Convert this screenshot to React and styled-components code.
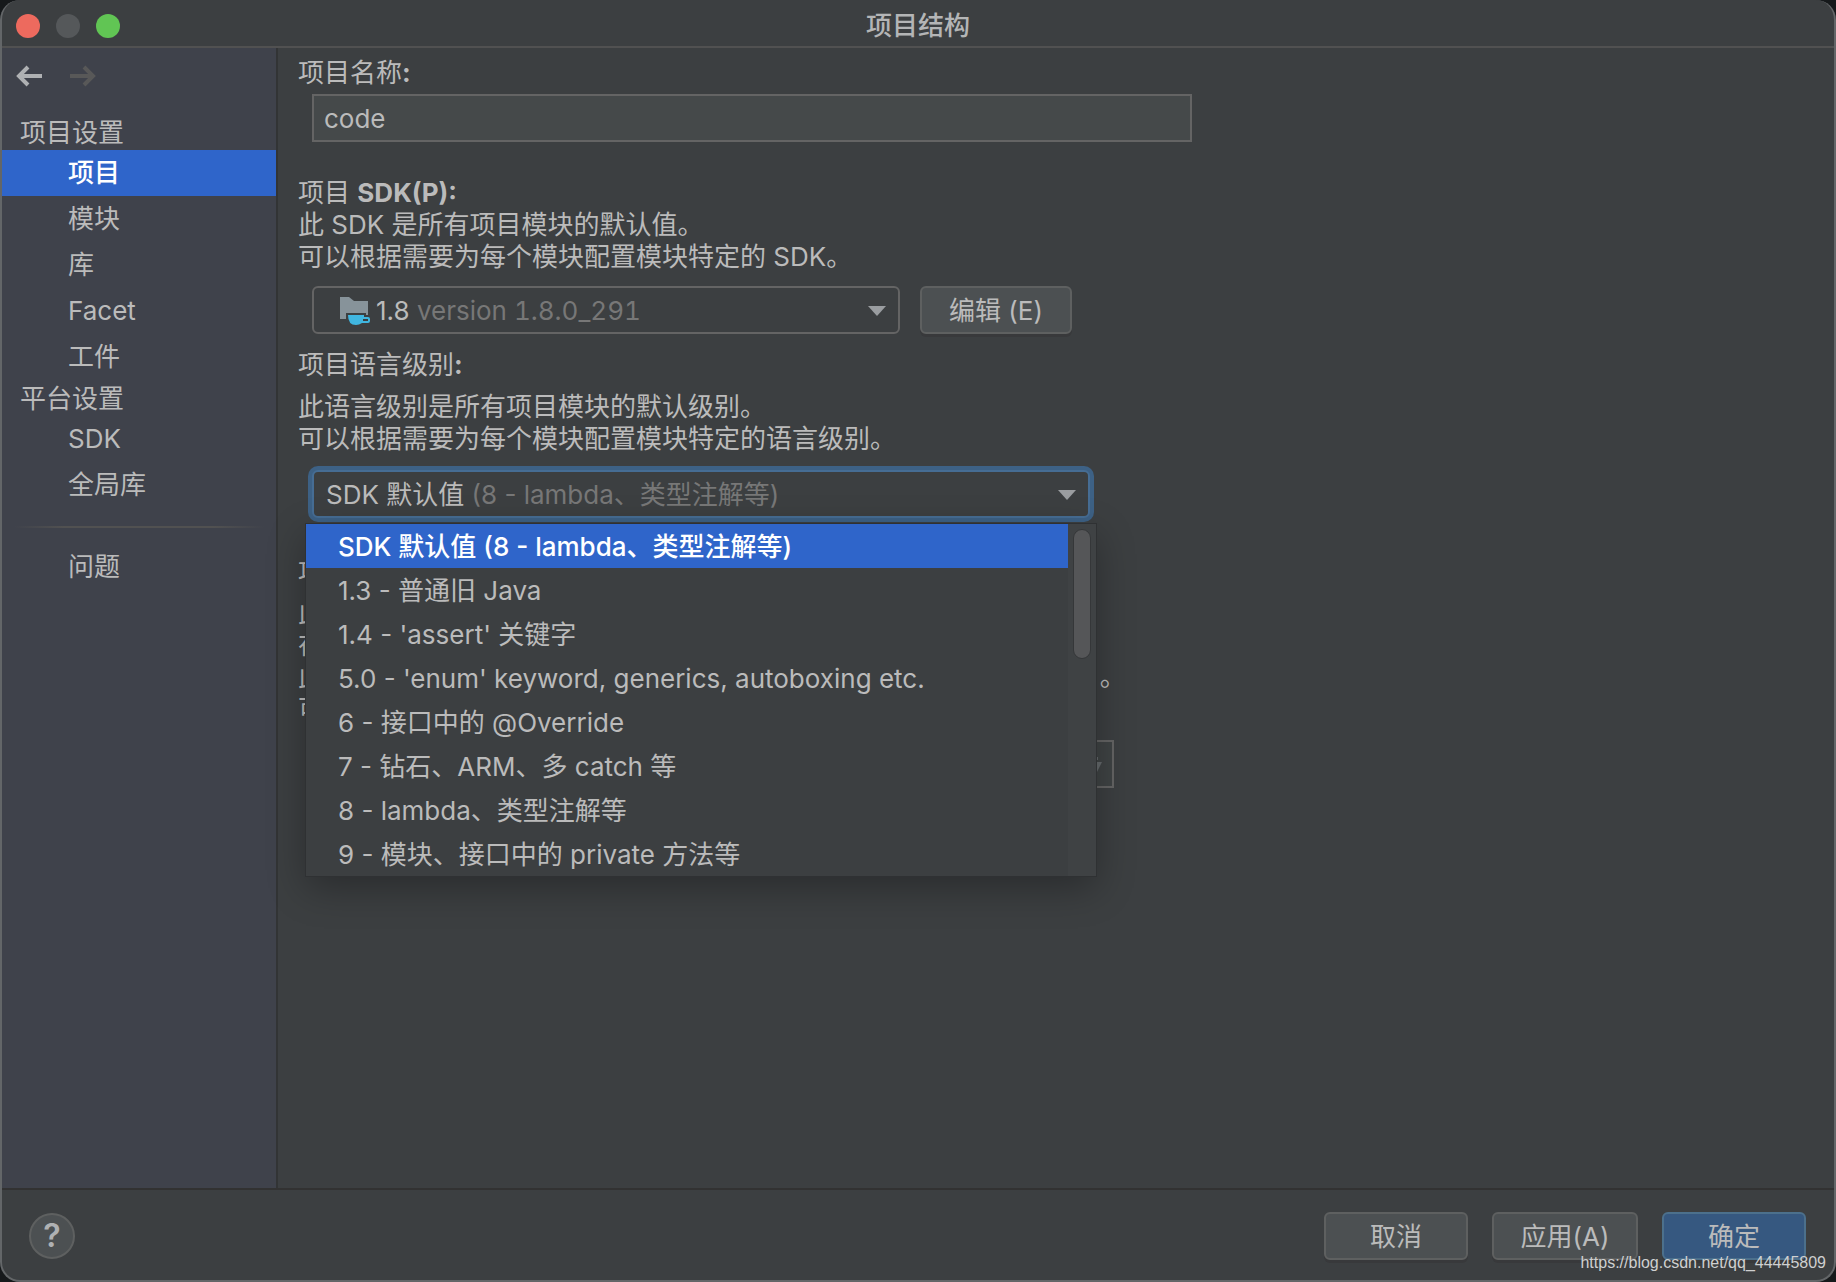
import React, { useState } from "react";
import styled, { createGlobalStyle } from "styled-components";

const projectItems = ["项目", "模块", "库", "Facet", "工件"];
const platformItems = ["SDK", "全局库"];

const levels = [
  { name: "SDK 默认值", detail: "(8 - lambda、类型注解等)" },
  { name: "1.3 - 普通旧 Java" },
  { name: "1.4 - 'assert' 关键字" },
  { name: "5.0 - 'enum' keyword, generics, autoboxing etc." },
  { name: "6 - 接口中的 @Override" },
  { name: "7 - 钻石、ARM、多 catch 等" },
  { name: "8 - lambda、类型注解等" },
  { name: "9 - 模块、接口中的 private 方法等" },
];

const BackArrow = () => (
  <svg width="28" height="22" viewBox="0 0 28 22" fill="none" stroke="currentColor" strokeWidth="4">
    <path d="M3 11H27M13 2L4 11L13 20" />
  </svg>
);

const ForwardArrow = () => (
  <svg width="28" height="22" viewBox="0 0 28 22" fill="none" stroke="currentColor" strokeWidth="4">
    <path d="M1 11H25M15 2L24 11L15 20" />
  </svg>
);

const Chevron = () => (
  <svg width="18" height="10" viewBox="0 0 18 10" fill="#9a9da0">
    <path d="M0 0H18L9 10Z" />
  </svg>
);

const SdkIcon = () => (
  <svg width="32" height="30" viewBox="0 0 32 30">
    <path d="M0 1H9L14 5H28V19H26V17H6V23H0Z" fill="#87939a" />
    <path
      fillRule="evenodd"
      d="M8 19H24V21H28Q30 21 30 23V25Q30 27 28 27H22Q19 29 16 29Q8 29 8 19ZM23 23V25H28V23Z"
      fill="#40b6e0"
    />
  </svg>
);

const FolderIcon = () => (
  <svg width="26" height="20" viewBox="0 0 26 20" fill="#65696c">
    <path d="M0 0H8L11 3H22V6H6L0 17Z" />
    <path d="M7 8H26L20 20H1Z" />
  </svg>
);

function NavItems({ items, active, onPick }) {
  return (
    <NavList>
      {items.map((item) => (
        <li key={item}>
          <NavLink
            href="#"
            $active={item === active}
            onClick={(e) => {
              e.preventDefault();
              onPick(item);
            }}
          >
            {item}
          </NavLink>
        </li>
      ))}
    </NavList>
  );
}

function App() {
  const [page, setPage] = useState("项目");
  const [name, setName] = useState("code");
  const [level, setLevel] = useState(0);
  const [open, setOpen] = useState(true);

  const pickLevel = (index) => {
    setLevel(index);
    setOpen(false);
  };

  return (
    <Window>
      <GlobalStyle />
      <TitleBar>
        <Lights>
          <Light type="button" aria-label="关闭" $color="#ed6a5e" />
          <Light type="button" aria-label="最小化" $color="#55585a" disabled />
          <Light type="button" aria-label="缩放" $color="#61c554" />
        </Lights>
        <Title>项目结构</Title>
      </TitleBar>

      <Body>
        <Sidebar>
          <History>
            <HistoryButton type="button" aria-label="后退">
              <BackArrow />
            </HistoryButton>
            <HistoryButton type="button" aria-label="前进" disabled>
              <ForwardArrow />
            </HistoryButton>
          </History>
          <NavTitle>项目设置</NavTitle>
          <NavItems items={projectItems} active={page} onPick={setPage} />
          <NavTitle>平台设置</NavTitle>
          <NavItems items={platformItems} active={page} onPick={setPage} />
          <Divider />
          <NavItems items={["问题"]} active={page} onPick={setPage} />
        </Sidebar>

        <Content>
          <Field $space={35}>
            <Label htmlFor="name">
              项目名称<b>:</b>
            </Label>
            <TextInput id="name" value={name} onChange={(e) => setName(e.target.value)} />
          </Field>

          <Field $space={15}>
            <Label htmlFor="sdk">
              项目 <b>SDK(P):</b>
            </Label>
            <Hint $above={0} $below={13}>
              此 SDK 是所有项目模块的默认值。
              <br />
              可以根据需要为每个模块配置模块特定的 SDK。
            </Hint>
            <SdkRow>
              <Combo $width={588}>
                <Select id="sdk">
                  <option>1.8 version 1.8.0_291</option>
                </Select>
                <Face $indent={28}>
                  <SdkIcon />
                  <FaceText>
                    1.8 <Version>version 1.8.0_291</Version>
                  </FaceText>
                  <Chevron />
                </Face>
              </Combo>
              <Button type="button" $width={152}>
                编辑 (E)
              </Button>
            </SdkRow>
          </Field>

          <Field $space={39}>
            <Label htmlFor="level">
              项目语言级别<b>:</b>
            </Label>
            <Hint $above={10} $below={15}>
              此语言级别是所有项目模块的默认级别。
              <br />
              可以根据需要为每个模块配置模块特定的语言级别。
            </Hint>
            <Combo $width={778}>
              <Select
                id="level"
                $focused
                value={level}
                onChange={(e) => pickLevel(Number(e.target.value))}
              >
                {levels.map((item, index) => (
                  <option key={item.name} value={index}>
                    {item.name} {item.detail}
                  </option>
                ))}
              </Select>
              <Face $indent={14}>
                <FaceText>
                  {levels[level].name} <Muted>{levels[level].detail}</Muted>
                </FaceText>
                <Chevron />
              </Face>
              {open && (
                <Popup>
                  <Options role="listbox" aria-label="项目语言级别">
                    {levels.map((item, index) => (
                      <Option
                        key={item.name}
                        role="option"
                        aria-selected={index === level}
                        $active={index === level}
                        onClick={() => pickLevel(index)}
                      >
                        {item.name} {item.detail}
                      </Option>
                    ))}
                  </Options>
                  <Track>
                    <Thumb />
                  </Track>
                </Popup>
              )}
            </Combo>
          </Field>

          <Field $space={0}>
            <Label htmlFor="output">
              项目编译器输出<b>:</b>
            </Label>
            <Hint $above={8} $below={15}>
              此路径用于存储所有项目编译结果。
              <br />
              在此路径下创建与每个模块对应的目录。
              <br />
              此目录包含两个子目录: 分别存放用于生产代码的 Production 和 Test 。
              <br />
              可以根据需要为每个模块配置模块特定的编译器输出路径。
            </Hint>
            <PathBox>
              <PathInput id="output" disabled />
              <FolderIcon />
            </PathBox>
          </Field>
        </Content>
      </Body>

      <Footer>
        <HelpButton type="button" aria-label="帮助">
          ?
        </HelpButton>
        <Actions>
          <Button type="button" $width={144}>
            取消
          </Button>
          <Button type="button" $width={146}>
            应用(A)
          </Button>
          <Button type="button" $width={144} $primary>
            确定
          </Button>
        </Actions>
      </Footer>
      <Watermark>https://blog.csdn.net/qq_44445809</Watermark>
    </Window>
  );
}

export default App;

const GlobalStyle = createGlobalStyle`
  * {
    box-sizing: border-box;
  }
  body {
    margin: 0;
    background: #16191b;
    color: #bbbbbb;
    font: 26px/32px Inter, "Noto Sans CJK SC", sans-serif;
  }
  button, input, select {
    margin: 0;
    font: inherit;
    color: inherit;
  }
`;

const Window = styled.div`
  position: relative;
  display: flex;
  flex-direction: column;
  min-height: 100vh;
  overflow: hidden;
  background: #3c3f41;
  border: 2px solid #636668;
  border-top: 0;
  border-radius: 20px;
`;

const TitleBar = styled.header`
  display: grid;
  grid-template-columns: 1fr auto 1fr;
  align-items: center;
  height: 48px;
  padding: 5px 14px 0;
  border-bottom: 2px solid #515151;
`;

const Lights = styled.div`
  display: flex;
  gap: 16px;
`;

const Light = styled.button`
  width: 24px;
  height: 24px;
  padding: 0;
  border: 0;
  border-radius: 50%;
  background: ${(props) => props.$color};
`;

const Title = styled.h1`
  margin: 0;
  font-size: 26px;
  font-weight: 500;
  color: #b4b5b6;
`;

const Body = styled.div`
  display: flex;
  flex: 1;
`;

const Sidebar = styled.nav`
  width: 276px;
  flex-shrink: 0;
  background: #3f424b;
  border-right: 2px solid #323435;
`;

const History = styled.div`
  display: flex;
  gap: 26px;
  height: 66px;
  padding: 17px 13px;
`;

const HistoryButton = styled.button`
  display: flex;
  width: 28px;
  height: 22px;
  padding: 0;
  border: 0;
  background: none;
  color: ${(props) => (props.disabled ? "#585858" : "#afb1b3")};
`;

const NavTitle = styled.h2`
  margin: 0;
  padding: 3px 18px 1px;
  font-size: 26px;
  font-weight: 400;
`;

const NavList = styled.ul`
  margin: 0;
  padding: 0;
  list-style: none;
`;

const NavLink = styled.a`
  display: block;
  padding: 7px 66px;
  text-decoration: none;
  color: ${(props) => (props.$active ? "#ffffff" : "inherit")};
  font-weight: ${(props) => (props.$active ? 500 : 400)};
  background: ${(props) => (props.$active ? "#2f65ca" : "none")};
`;

const Divider = styled.hr`
  height: 2px;
  margin: 18px 12px 16px;
  border: 0;
  background: linear-gradient(90deg, transparent, #515151 20%, #515151 80%, transparent);
`;

const Content = styled.main`
  flex: 1;
  min-width: 0;
  padding: 9px 20px 40px;
`;

const Field = styled.section`
  display: flex;
  flex-direction: column;
  align-items: flex-start;
  margin-bottom: ${(props) => props.$space}px;
`;

const Label = styled.label`
  white-space: pre-wrap;
`;

const Hint = styled.p`
  margin: ${(props) => props.$above}px 0 ${(props) => props.$below}px;
`;

const TextInput = styled.input`
  width: 880px;
  max-width: 100%;
  height: 48px;
  margin: 5px 0 0 14px;
  padding: 0 10px;
  border: 2px solid #646464;
  background: #45494a;
`;

const SdkRow = styled.div`
  display: flex;
  gap: 20px;
`;

const Combo = styled.div`
  position: relative;
  display: grid;
  width: ${(props) => props.$width}px;
  height: 48px;
  margin-left: 14px;
`;

const Select = styled.select`
  grid-area: 1 / 1;
  appearance: none;
  border: 2px solid ${(props) => (props.$focused ? "#466d94" : "#646464")};
  border-radius: 6px;
  box-shadow: ${(props) => (props.$focused ? "0 0 0 4px #3d6185" : "none")};
  background: #3c3f41;
  color: transparent;
  outline: none;

  option {
    color: #bbbbbb;
  }
`;

const Face = styled.div`
  grid-area: 1 / 1;
  display: flex;
  align-items: center;
  gap: 4px;
  padding: 2px 14px 0 ${(props) => props.$indent}px;
  pointer-events: none;
`;

const FaceText = styled.span`
  flex: 1;
`;

const Muted = styled.span`
  color: #777777;
`;

const Version = styled(Muted)`
  font-variant-numeric: tabular-nums;
`;

const Popup = styled.div`
  position: absolute;
  z-index: 1;
  top: 54px;
  left: -6px;
  right: -6px;
  display: flex;
  background: #3c3f41;
  box-shadow: 0 0 0 1px #2f3133, 0 12px 36px rgba(0, 0, 0, 0.3);
`;

const Options = styled.ul`
  flex: 1;
  margin: 0;
  padding: 0;
  list-style: none;
`;

const Option = styled.li`
  padding: 7px 32px 5px;
  color: ${(props) => (props.$active ? "#ffffff" : "inherit")};
  font-weight: ${(props) => (props.$active ? 500 : 400)};
  background: ${(props) => (props.$active ? "#2f65ca" : "none")};
`;

const Track = styled.div`
  width: 28px;
  padding: 5px;
  background: #3f4244;
`;

const Thumb = styled.div`
  height: 130px;
  border: 1px solid #353739;
  border-radius: 9px;
  background: #555658;
`;

const PathBox = styled.div`
  display: flex;
  align-items: center;
  width: 802px;
  height: 48px;
  margin-left: 14px;
  padding-right: 10px;
  border: 2px solid #646464;
  background: #3f4344;
`;

const PathInput = styled.input`
  flex: 1;
  padding: 0 10px;
  border: 0;
  background: none;
`;

const Button = styled.button`
  width: ${(props) => props.$width}px;
  height: 48px;
  padding: 2px 0 0;
  border: 2px solid ${(props) => (props.$primary ? "#4c708c" : "#5e6060")};
  border-radius: 6px;
  background: ${(props) => (props.$primary ? "#365880" : "#4c5052")};
  box-shadow: 0 3px 0 #38393b;
`;

const Footer = styled.footer`
  display: flex;
  align-items: center;
  justify-content: space-between;
  height: 92px;
  padding: 2px 28px 0 27px;
  border-top: 2px solid #323232;
`;

const HelpButton = styled.button`
  width: 46px;
  height: 46px;
  padding: 0;
  border: 2px solid #5e6060;
  border-radius: 50%;
  background: #4c5052;
  font-size: 32px;
  font-weight: 600;
  color: #afb1b3;
`;

const Actions = styled.div`
  display: flex;
  gap: 24px;
`;

const Watermark = styled.div`
  position: absolute;
  right: 8px;
  bottom: 5px;
  font: 16px/24px "Liberation Sans", Arial, sans-serif;
  color: #cfd0d0;
`;
